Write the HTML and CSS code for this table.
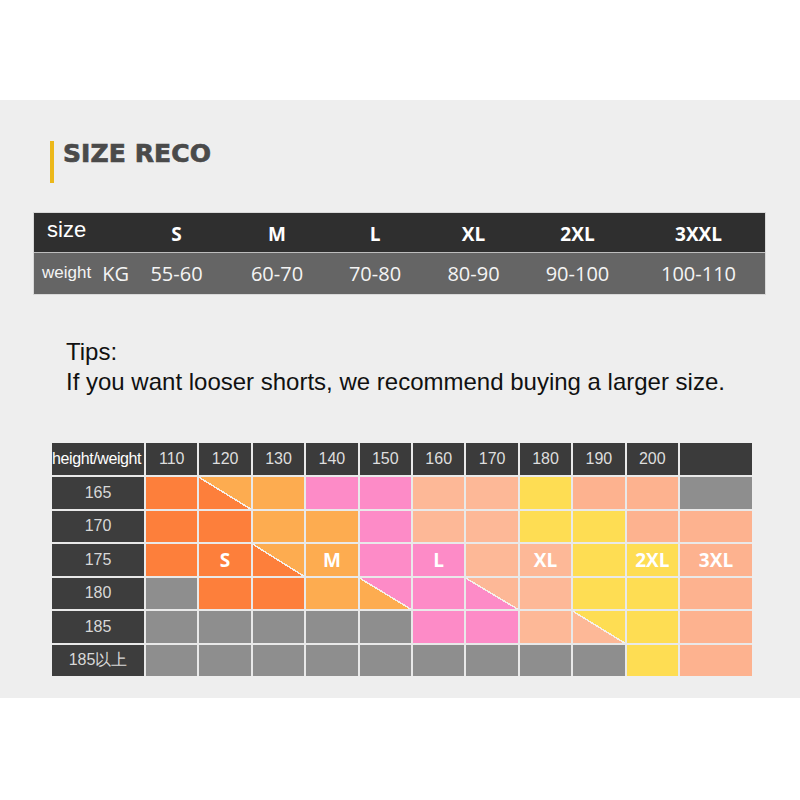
FILE: index.html
```html
<!DOCTYPE html>
<html>
<head>
<meta charset="utf-8">
<link rel="stylesheet" href="styles.css">
</head>
<body>
<div class="spacer"></div>
<main class="panel">
  <div class="title">
    <span class="title-bar"></span>
    <h1 class="title-text">SIZE RECO</h1>
  </div>

  <div class="size-table">
    <div class="st-row st-head">
      <div class="st-cell st-label"><span class="lbl-size">size</span></div>
      <div class="st-cell">S</div>
      <div class="st-cell">M</div>
      <div class="st-cell">L</div>
      <div class="st-cell">XL</div>
      <div class="st-cell">2XL</div>
      <div class="st-cell">3XXL</div>
    </div>
    <div class="st-row st-body">
      <div class="st-cell st-label"><span class="lbl-weight">weight</span><span class="lbl-kg">KG</span></div>
      <div class="st-cell">55-60</div>
      <div class="st-cell">60-70</div>
      <div class="st-cell">70-80</div>
      <div class="st-cell">80-90</div>
      <div class="st-cell">90-100</div>
      <div class="st-cell">100-110</div>
    </div>
  </div>

  <div class="tips">
    <p>Tips:</p>
    <p>If you want looser shorts, we recommend buying a larger size.</p>
  </div>

  <div class="chart">
    <div class="hd hd-first">height/weight</div>
    <div class="hd">110</div><div class="hd">120</div><div class="hd">130</div><div class="hd">140</div><div class="hd">150</div>
    <div class="hd">160</div><div class="hd">170</div><div class="hd">180</div><div class="hd">190</div><div class="hd">200</div>
    <div class="hd"></div>

    <div class="rl">165</div>
    <div class="c s"></div><div class="c d-s-m"></div><div class="c m"></div><div class="c l"></div><div class="c l"></div>
    <div class="c xl"></div><div class="c xl"></div><div class="c x2"></div><div class="c x3"></div><div class="c x3"></div>
    <div class="c g"></div>

    <div class="rl">170</div>
    <div class="c s"></div><div class="c s"></div><div class="c m"></div><div class="c m"></div><div class="c l"></div>
    <div class="c xl"></div><div class="c xl"></div><div class="c x2"></div><div class="c x2"></div><div class="c x3"></div>
    <div class="c x3"></div>

    <div class="rl">175</div>
    <div class="c s"></div><div class="c s">S</div><div class="c d-s-m"></div><div class="c m">M</div><div class="c l"></div>
    <div class="c l">L</div><div class="c xl"></div><div class="c xl">XL</div><div class="c x2"></div><div class="c x2">2XL</div>
    <div class="c x3">3XL</div>

    <div class="rl">180</div>
    <div class="c g"></div><div class="c s"></div><div class="c s"></div><div class="c m"></div><div class="c d-m-l"></div>
    <div class="c l"></div><div class="c d-l-xl"></div><div class="c xl"></div><div class="c x2"></div><div class="c x2"></div>
    <div class="c x3"></div>

    <div class="rl">185</div>
    <div class="c g"></div><div class="c g"></div><div class="c g"></div><div class="c g"></div><div class="c g"></div>
    <div class="c l"></div><div class="c l"></div><div class="c xl"></div><div class="c d-xl-2"></div><div class="c x2"></div>
    <div class="c x3"></div>

    <div class="rl">185以上</div>
    <div class="c g"></div><div class="c g"></div><div class="c g"></div><div class="c g"></div><div class="c g"></div>
    <div class="c g"></div><div class="c g"></div><div class="c g"></div><div class="c g"></div><div class="c x2"></div>
    <div class="c x3"></div>
  </div>
</main>
</body>
</html>
```

FILE: styles.css
```css
* { box-sizing: border-box; }
html, body { margin: 0; padding: 0; background: #ffffff; }
body { width: 800px; height: 800px; overflow: hidden; font-family: "Liberation Sans", Arial, sans-serif; }

.spacer { height: 100px; }

.panel {
  height: 598px;
  background: #eeeeee;
  padding-top: 41px;
  display: flex;
  flex-direction: column;
}

/* Title */
.title { display: flex; align-items: flex-start; margin-left: 50px; }
.title-bar { width: 4px; height: 42px; background: #ecb81a; flex: none; }
.title-text {
  margin: 0 0 0 9px;
  font-family: "DejaVu Sans", sans-serif;
  font-weight: 700;
  font-size: 25px;
  line-height: 26px;
  color: #4a4a4a;
  letter-spacing: 0.1px;
  -webkit-text-stroke: 0.7px #4a4a4a;
}

/* Top size table */
.size-table {
  margin: 29px 0 0 33px;
  width: 733px;
  border: 1px solid #d8d8d8;
}
.st-row {
  display: grid;
  grid-template-columns: 91px 103px 98px 98px 99px 109px 133px;
}
.st-head { height: 40px; background: #2f2f2f; border-bottom: 1px solid #bdbdbd; }
.st-body { height: 41px; background: #656565; }
.st-cell {
  display: flex; align-items: center; justify-content: center;
  color: #ffffff;
}
.st-head .st-cell { font-family: "Open Sans", sans-serif; font-weight: 700; font-size: 19px; padding-top: 2px; }
.st-body .st-cell { font-family: "Open Sans", sans-serif; font-size: 20px; color: #f4f4f4; }
.st-cell.st-label { justify-content: flex-start; }
.lbl-size { font-family: "Liberation Sans", Arial, sans-serif; font-weight: 400; font-size: 22px; margin: -7px 0 0 13px; }
.lbl-weight { font-family: "Liberation Sans", Arial, sans-serif; font-size: 17px; margin: -2px 0 0 8px; }
.lbl-kg { font-family: "Open Sans", sans-serif; font-size: 20px; margin-left: 11px; }

/* Tips */
.tips { margin: 42px 0 0 66px; font-family: "Liberation Sans", Arial, sans-serif; font-size: 24px; line-height: 30px; color: #111111; }
.tips p { margin: 0; }

/* Chart */
.chart {
  margin: 46px 0 0 52px;
  width: 700px;
  display: grid;
  grid-template-columns: 92px repeat(10, 1fr) 72px;
  grid-template-rows: 32px repeat(6, 31.5px);
  gap: 2px;
  background: #e9e9e9;
}
.hd {
  background: #3b3b3b;
  color: #dedede;
  font-size: 16px;
  display: flex; align-items: center; justify-content: center;
}
.hd-first { font-size: 16px; letter-spacing: -0.4px; color: #ffffff; justify-content: flex-start; white-space: nowrap; overflow: hidden; }
.rl {
  background: #3d3d3d;
  color: #d8d8d8;
  font-size: 16px;
  display: flex; align-items: center; justify-content: center;
}
.c {
  display: flex; align-items: center; justify-content: center;
  font-family: "Open Sans", sans-serif; font-weight: 700; font-size: 19px; color: #ffffff;
}
.s { background: #fd7f3b; }
.m { background: #fdac50; }
.l { background: #fd8bc7; }
.xl { background: #fdb897; }
.x2 { background: #fedd53; }
.x3 { background: #fdb28f; }
.g { background: #8e8e8e; }

.d-s-m { background: linear-gradient(to top right, #fd7f3b calc(50% - 1px), #f6f0ea calc(50% - 1px), #f6f0ea calc(50% + 0.5px), #fdac50 calc(50% + 0.5px)); }
.d-m-l { background: linear-gradient(to top right, #fdac50 calc(50% - 1px), #f6f0ea calc(50% - 1px), #f6f0ea calc(50% + 0.5px), #fd8bc7 calc(50% + 0.5px)); }
.d-l-xl { background: linear-gradient(to top right, #fd8bc7 calc(50% - 1px), #f6f0ea calc(50% - 1px), #f6f0ea calc(50% + 0.5px), #fdb897 calc(50% + 0.5px)); }
.d-xl-2 { background: linear-gradient(to top right, #fdb897 calc(50% - 1px), #f6f0ea calc(50% - 1px), #f6f0ea calc(50% + 0.5px), #fedd53 calc(50% + 0.5px)); }
```
